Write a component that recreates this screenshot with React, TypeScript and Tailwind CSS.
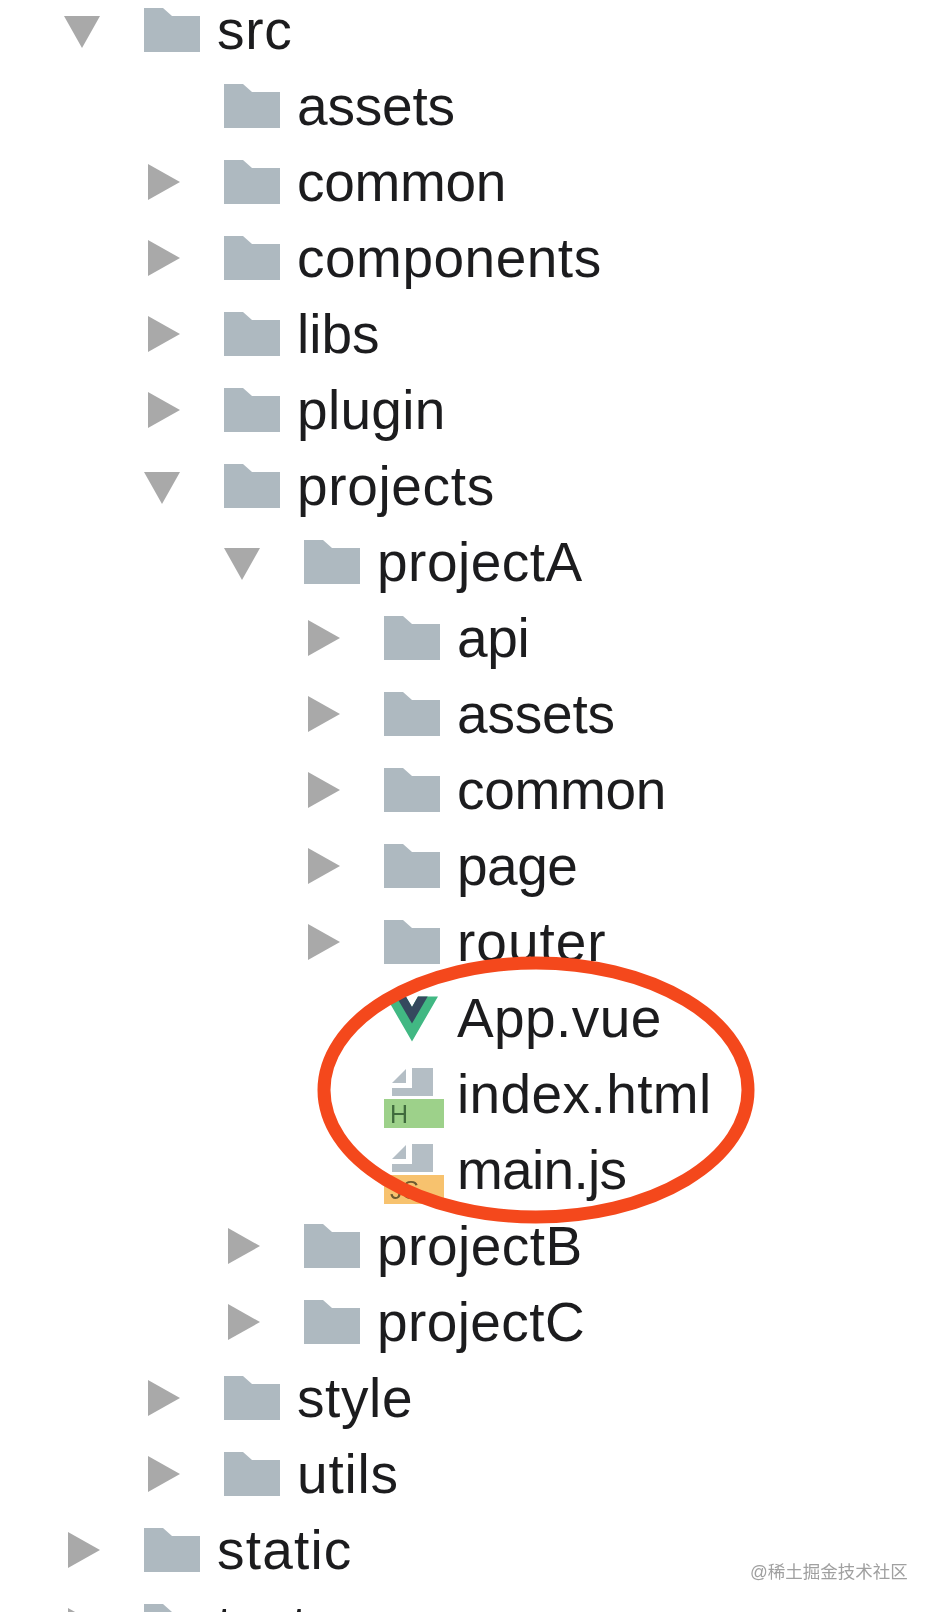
const depthPad = ["pl-[64px]", "pl-[144px]", "pl-[224px]", "pl-[304px]"];

type RowData = {
  name: string;
  depth: number;
  arrow?: "down" | "right";
  icon?: "vue" | "html" | "js";
  track: string;
};

const rows: RowData[] = [
  { name: "src", depth: 0, arrow: "down", track: "tracking-[0.7px]" },
  { name: "assets", depth: 1, track: "tracking-[-0.2px]" },
  { name: "common", depth: 1, arrow: "right", track: "tracking-[-0.3px]" },
  { name: "components", depth: 1, arrow: "right", track: "tracking-[0.5px]" },
  { name: "libs", depth: 1, arrow: "right", track: "tracking-[0px]" },
  { name: "plugin", depth: 1, arrow: "right", track: "tracking-[0.3px]" },
  { name: "projects", depth: 1, arrow: "down", track: "tracking-[0.65px]" },
  { name: "projectA", depth: 2, arrow: "down", track: "tracking-[0.5px]" },
  { name: "api", depth: 3, arrow: "right", track: "tracking-[-0.3px]" },
  { name: "assets", depth: 3, arrow: "right", track: "tracking-[-0.2px]" },
  { name: "common", depth: 3, arrow: "right", track: "tracking-[-0.3px]" },
  { name: "page", depth: 3, arrow: "right", track: "tracking-[-0.5px]" },
  { name: "router", depth: 3, arrow: "right", track: "tracking-[1px]" },
  { name: "App.vue", depth: 3, icon: "vue", track: "tracking-[0.4px]" },
  { name: "index.html", depth: 3, icon: "html", track: "tracking-[0.4px]" },
  { name: "main.js", depth: 3, icon: "js", track: "tracking-[-0.7px]" },
  { name: "projectB", depth: 2, arrow: "right", track: "tracking-[0.5px]" },
  { name: "projectC", depth: 2, arrow: "right", track: "tracking-[0.4px]" },
  { name: "style", depth: 1, arrow: "right", track: "tracking-[0.6px]" },
  { name: "utils", depth: 1, arrow: "right", track: "tracking-[0.8px]" },
  { name: "static", depth: 0, arrow: "right", track: "tracking-[1.2px]" },
  { name: "test", depth: 0, arrow: "right", track: "tracking-[0.5px]" },
];

function Arrow({ dir }: { dir?: "down" | "right" }) {
  return (
    <div className="w-[80px] shrink-0">
      {dir === "down" && (
        <svg width="36" height="32" viewBox="0 0 36 32" className="block mt-[3px]">
          <polygon points="0,0 36,0 18,32" fill="#a9a9a9" />
        </svg>
      )}
      {dir === "right" && (
        <svg width="32" height="36" viewBox="0 0 32 36" className="block ml-[4px]">
          <polygon points="0,0 32,18 0,36" fill="#a9a9a9" />
        </svg>
      )}
    </div>
  );
}

function Folder() {
  return (
    <svg width="56" height="44" viewBox="0 0 56 44" className="block">
      <path d="M0 0H19L28 8H56V44H0Z" fill="#aeb9c0" />
    </svg>
  );
}

function Icon({ kind }: { kind: "vue" | "html" | "js" }) {
  if (kind === "vue")
    return (
      <svg width="52" height="46" viewBox="0 0 256 221" className="block ml-[2px] mt-[2px]">
        <path d="M204.8 0H256L128 220.8 0 0H97.92L128 51.2 157.44 0Z" fill="#41b883" />
        <path d="M50.08 0H97.92L128 51.2 157.44 0H205.28L128 132.48Z" fill="#35495e" />
      </svg>
    );
  const band = kind === "html" ? "#9dd18a" : "#f7c26e";
  const label = kind === "html" ? "H" : "JS";
  const labelColor = kind === "html" ? "text-[#3f6b3d]" : "text-[#6d5a30]";
  return (
    <div className="relative w-[60px] h-[60px] mt-[8px]">
      <svg width="60" height="60" viewBox="0 0 60 60" className="block">
        <polygon points="8,15 22,1 22,15" fill="#b4bec5" />
        <rect x="28" y="0" width="21" height="20" fill="#b4bec5" />
        <rect x="8" y="20" width="41" height="8" fill="#b4bec5" />
        <rect x="0" y="31" width="60" height="29" fill={band} />
      </svg>
      <span className={`absolute left-[6px] top-[32px] text-[25px] leading-[28px] font-medium ${labelColor}`}>
        {label}
      </span>
    </div>
  );
}

function Row({ row }: { row: RowData }) {
  return (
    <div className={`flex items-center h-[76px] ${depthPad[row.depth]}`}>
      <Arrow dir={row.arrow} />
      <div className="w-[73px] shrink-0 flex items-center">
        {row.icon ? <Icon kind={row.icon} /> : <Folder />}
      </div>
      <span className={`text-[55px] leading-[76px] text-[#1c1c1e] whitespace-nowrap ${row.track}`}>{row.name}</span>
    </div>
  );
}

export default function App() {
  return (
    <div className="relative w-[940px] h-[1612px] overflow-hidden bg-white font-['Liberation_Sans',sans-serif]">
      <div className="-mt-[8px] blur-[0.6px]">
        {rows.map((r, i) => (
          <Row key={i} row={r} />
        ))}
      </div>
      <svg width="460" height="280" viewBox="0 0 460 280" className="absolute left-[306px] top-[950px] blur-[0.4px]">
        <ellipse cx="230" cy="140" rx="212" ry="127" fill="none" stroke="#f4481c" strokeWidth="13" />
      </svg>
      <span className="absolute left-[750px] top-[1559px] text-[17.5px] leading-[26px] text-[#a0a0a0] whitespace-nowrap blur-[0.4px] font-['Liberation_Sans','Noto_Sans_CJK_SC',sans-serif]">
        @稀土掘金技术社区
      </span>
    </div>
  );
}
